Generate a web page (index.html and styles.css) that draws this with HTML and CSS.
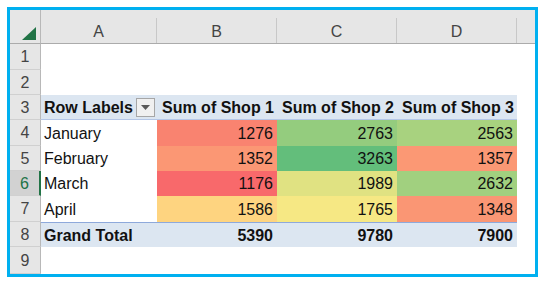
FILE: index.html
```html
<!DOCTYPE html>
<html>
<head>
<meta charset="utf-8">
<link rel="stylesheet" href="styles.css">
</head>
<body>
<div class="frame">
  <div class="sheet">
    <div class="corner"><svg class="tri" width="14" height="13" viewBox="0 0 14 13"><polygon points="14,0 14,13 0,13" fill="#217346"/></svg></div>
    <div class="colh"><span>A</span></div>
    <div class="colh"><span>B</span></div>
    <div class="colh"><span>C</span></div>
    <div class="colh"><span>D</span></div>
    <div class="colh last"><span></span></div>

    <div class="rowh">1</div><div class="c"></div><div class="c"></div><div class="c"></div><div class="c"></div><div class="c"></div>
    <div class="rowh">2</div><div class="c"></div><div class="c"></div><div class="c"></div><div class="c"></div><div class="c"></div>

    <div class="rowh">3</div>
    <div class="c hd lab">Row Labels <span class="dd"><svg width="9" height="5" viewBox="0 0 9 5"><polygon points="0,0 9,0 4.5,5" fill="#595959"/></svg></span></div>
    <div class="c hd num">Sum of Shop 1</div>
    <div class="c hd num">Sum of Shop 2</div>
    <div class="c hd num">Sum of Shop 3</div>
    <div class="c"></div>

    <div class="rowh">4</div>
    <div class="c lab">January</div>
    <div class="c num" style="background:#f98370">1276</div>
    <div class="c num" style="background:#94cc7e">2763</div>
    <div class="c num" style="background:#a8d27f">2563</div>
    <div class="c"></div>

    <div class="rowh">5</div>
    <div class="c lab">February</div>
    <div class="c num" style="background:#fb9774">1352</div>
    <div class="c num" style="background:#63be7b">3263</div>
    <div class="c num" style="background:#fb9874">1357</div>
    <div class="c"></div>

    <div class="rowh sel">6</div>
    <div class="c lab">March</div>
    <div class="c num" style="background:#f8696b">1176</div>
    <div class="c num" style="background:#e0e282">1989</div>
    <div class="c num" style="background:#a1d07f">2632</div>
    <div class="c"></div>

    <div class="rowh">7</div>
    <div class="c lab">April</div>
    <div class="c num" style="background:#fed480">1586</div>
    <div class="c num" style="background:#f6e884">1765</div>
    <div class="c num" style="background:#fa9674">1348</div>
    <div class="c"></div>

    <div class="rowh">8</div>
    <div class="c tot lab">Grand Total</div>
    <div class="c tot num">5390</div>
    <div class="c tot num">9780</div>
    <div class="c tot num">7900</div>
    <div class="c"></div>

    <div class="rowh">9</div><div class="c"></div><div class="c"></div><div class="c"></div><div class="c"></div><div class="c"></div>
  </div>
</div>
</body>
</html>
```

FILE: styles.css
```css
html, body {
  margin: 0;
  padding: 0;
  background: #ffffff;
}
body {
  padding: 7px 0 0 7px;
}
.frame {
  width: 525px;
  height: 264px;
  border: 3px solid #00b0f0;
  background: #ffffff;
  overflow: hidden;
}
.sheet {
  display: grid;
  grid-template-columns: 31px 116px 120px 120px 120px 18px;
  grid-template-rows: 34px 26px 25px 25px 26px 25px 25px 26px 25px 27px;
  font-family: "Liberation Sans", Arial, sans-serif;
  font-size: 16px;
  color: #111;
}
.sheet > div {
  box-sizing: border-box;
  min-width: 0;
}
.corner {
  background: #e6e6e6;
  border-right: 1px solid #b8b8b8;
  border-bottom: 1px solid #ababab;
  display: flex;
  align-items: flex-end;
  justify-content: flex-end;
  padding: 0 4px 3px 0;
}
.tri {
  display: block;
}
.colh {
  background: #e6e6e6;
  border-bottom: 1px solid #ababab;
  display: flex;
  align-items: flex-end;
}
.colh span {
  flex: 1;
  height: 25px;
  border-right: 1px solid #c8c8c8;
  display: flex;
  align-items: center;
  justify-content: center;
  padding-top: 2px;
  box-sizing: border-box;
  font-size: 16px;
  color: #444;
}
.colh.last span {
  border-right: none;
}
.rowh {
  background: #e6e6e6;
  border-right: 1px solid #b8b8b8;
  border-bottom: 1px solid #d0d0d0;
  display: flex;
  align-items: center;
  justify-content: center;
  font-size: 16px;
  color: #444;
  padding-top: 1px;
}
.rowh.sel {
  background: #d2d2d2;
  color: #217346;
  border-right: 2px solid #217346;
}
.c {
  display: flex;
  align-items: center;
  white-space: nowrap;
  padding-top: 1px;
}
.lab {
  padding-left: 3px;
}
.num {
  justify-content: flex-end;
  padding-right: 4px;
}
.hd {
  background: #dce6f1;
  font-weight: bold;
  border-bottom: 1px solid #b4c6e7;
}
.hd.num {
  padding-right: 3px;
}
.tot {
  background: #dce6f1;
  font-weight: bold;
  border-top: 1px solid #8ea9db;
}
.dd {
  display: inline-flex;
  align-items: center;
  justify-content: center;
  width: 19px;
  height: 19px;
  box-sizing: border-box;
  margin-left: 3px;
  background: #f0f0f0;
  border: 1px solid #a6a6a6;
}
.dd svg {
  display: block;
}
```
